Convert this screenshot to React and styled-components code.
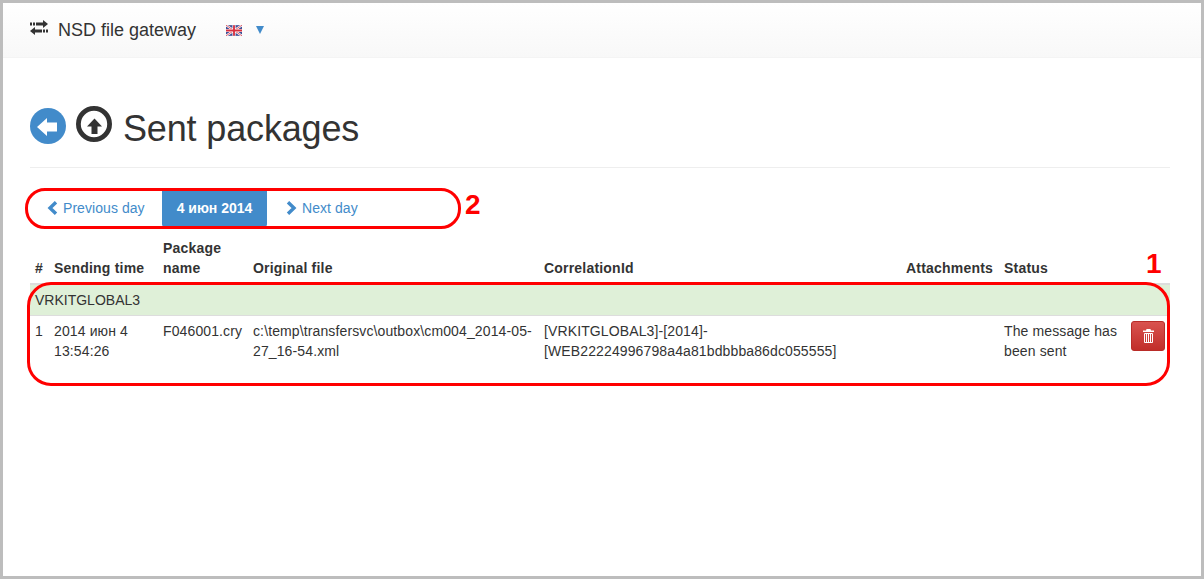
import React from "react";
import styled, { createGlobalStyle } from "styled-components";

const Global = createGlobalStyle`
  html, body { margin: 0; padding: 0; background: #fff; }
  body { font-family: "Liberation Sans", Arial, sans-serif; font-size: 14px; line-height: 20px; color: #333; }
`;

const Frame = styled.div`
  position: relative;
  box-sizing: border-box;
  width: 1204px;
  height: 579px;
  border: 3px solid #bdbdbd;
  overflow: hidden;
`;

const Navbar = styled.header`
  box-sizing: border-box;
  height: 55px;
  display: flex;
  align-items: center;
  padding: 0 0 0 27px;
  background: linear-gradient(to bottom, #ffffff 0%, #f8f8f8 100%);
  border-bottom: 1px solid #f4f4f4;
`;

const Brand = styled.div`
  display: flex;
  align-items: center;
  gap: 10px;
  font-size: 18px;
  color: #333;
`;

const BrandIcon = styled.span`
  display: inline-flex;
  margin-top: -6px;
`;

const Lang = styled.div`
  display: flex;
  align-items: center;
  gap: 14px;
  margin-left: 30px;
  margin-top: 0;
`;

const Caret = styled.span`
  width: 0;
  height: 0;
  border-left: 4px solid transparent;
  border-right: 4px solid transparent;
  border-top: 8px solid #428bca;
`;

const Main = styled.main`
  padding: 46px 31px 0 27px;
`;

const PageHeader = styled.div`
  display: flex;
  align-items: center;
  height: 49px;
  padding-bottom: 14px;
  border-bottom: 1px solid #eee;
  gap: 10px;
`;

const Title = styled.h1`
  margin: 0 0 0 1px;
  font-size: 36px;
  line-height: 40px;
  font-weight: 400;
  letter-spacing: -0.15px;
  color: #333;
`;

const IconSlot = styled.span`
  display: inline-flex;
  margin-top: ${(p) => p.$top}px;
`;

const Pager = styled.nav`
  display: flex;
  align-items: stretch;
  height: 38px;
  margin-top: 21px;
`;

const PagerLink = styled.a`
  display: flex;
  align-items: center;
  gap: 5px;
  box-sizing: border-box;
  width: ${(p) => p.$w}px;
  padding-left: ${(p) => p.$pad}px;
  color: #428bca;
  font-size: 14px;
  letter-spacing: 0.06px;
`;

const PagerActive = styled.span`
  display: flex;
  align-items: center;
  justify-content: center;
  width: 105px;
  background: #428bca;
  color: #fff;
  font-weight: 700;
  border-radius: 0 0 3px 3px;
`;

const Table = styled.table`
  width: 1140px;
  margin-top: 6px;
  border-collapse: collapse;
  table-layout: fixed;
`;

const Th = styled.th`
  width: ${(p) => p.$w}px;
  padding: 5px;
  text-align: left;
  vertical-align: bottom;
  font-size: 14px;
  line-height: 20px;
  font-weight: 700;
  letter-spacing: 0.2px;
  border-bottom: 2px solid #ddd;
`;

const GroupCell = styled.td`
  padding: 5px;
  height: 20px;
  background: #dff0d8;
  border-bottom: 1px solid #ddd;
  line-height: 20px;
`;

const Td = styled.td`
  padding: 5px;
  vertical-align: top;
  line-height: 20px;
  letter-spacing: 0.12px;
`;

const DeleteButton = styled.button`
  display: flex;
  align-items: center;
  justify-content: center;
  width: 34px;
  height: 30px;
  padding: 0;
  border: 1px solid #b92c28;
  border-radius: 3px;
  background: linear-gradient(to bottom, #d9534f 0%, #c12e2a 100%);
  color: #fff;
`;

const Oval = styled.div`
  position: absolute;
  left: ${(p) => p.$x}px;
  top: ${(p) => p.$y}px;
  width: ${(p) => p.$w}px;
  height: ${(p) => p.$h}px;
  box-sizing: border-box;
  border: 3px solid #f00;
  border-radius: ${(p) => p.$r}px;
  pointer-events: none;
`;

const Mark = styled.span`
  position: absolute;
  left: ${(p) => p.$x}px;
  top: ${(p) => p.$y}px;
  font-size: 28px;
  line-height: 30px;
  font-weight: 700;
  color: #f00;
`;

const TransferIcon = () => (
  <svg width="18" height="15" viewBox="0 0 18 15" style={{ display: "block" }}>
    <path fill="#333" d="M0 2.5h2v3H0zM3 2.5h2v3H3zM6 2.5h7V0l5 4-5 4V5.5H6z" />
    <path fill="#333" d="M18 9.5h-2v3h2zM15 9.5h-2v3h2zM12 9.5H5V7l-5 4 5 4v-2.5h7z" />
  </svg>
);

const Flag = () => (
  <svg width="16" height="11" viewBox="0 0 60 40" style={{ display: "block" }}>
    <rect width="60" height="40" fill="#3f4f96" />
    <path d="M0 0L60 40M60 0L0 40" stroke="#fff" strokeWidth="8" />
    <path d="M0 0L60 40M60 0L0 40" stroke="#d8404f" strokeWidth="3" />
    <path d="M30 0V40M0 20H60" stroke="#fff" strokeWidth="12" />
    <path d="M30 0V40M0 20H60" stroke="#d82f3f" strokeWidth="7" />
  </svg>
);

const BackIcon = () => (
  <svg width="36" height="36" viewBox="0 0 36 36" style={{ display: "block" }}>
    <circle cx="18" cy="18" r="18" fill="#428bca" />
    <path fill="#fff" d="M7 19L17 10V14.5H27V23.5H17V28Z" />
  </svg>
);

const UpIcon = () => (
  <svg width="36" height="36" viewBox="0 0 36 36" style={{ display: "block" }}>
    <circle cx="18" cy="18" r="15.6" fill="#fff" stroke="#333" strokeWidth="4.8" />
    <path fill="#333" d="M18.5 12.5L26 20.5H21.5V28H15.5V20.5H11Z" />
  </svg>
);

const ChevronLeft = () => (
  <svg width="11" height="14" viewBox="0 0 11 14">
    <path fill="none" stroke="#428bca" strokeWidth="3.4" d="M9 1.2L3 7l6 5.8" />
  </svg>
);

const ChevronRight = () => (
  <svg width="11" height="14" viewBox="0 0 11 14">
    <path fill="none" stroke="#428bca" strokeWidth="3.4" d="M2 1.2L8 7l-6 5.8" />
  </svg>
);

const TrashIcon = () => (
  <svg width="11" height="14" viewBox="0 0 11 14">
    <path fill="none" stroke="#fff" d="M1.5 4.5h8v9h-8zM3.5 5v8M5.5 5v8M7.5 5v8" />
    <path fill="#fff" d="M3.5 0h4l.5 1.5h3V3H0V1.5h3z" />
  </svg>
);

export default function App() {
  return (
    <>
      <Global />
      <Frame>
        <Navbar>
          <Brand>
            <BrandIcon><TransferIcon /></BrandIcon>
            NSD file gateway
          </Brand>
          <Lang>
            <Flag />
            <Caret />
          </Lang>
        </Navbar>
        <Main>
          <PageHeader>
            <IconSlot $top={-5}><BackIcon /></IconSlot>
            <IconSlot $top={-9}><UpIcon /></IconSlot>
            <Title>Sent packages</Title>
          </PageHeader>
          <Pager>
            <PagerLink $w={132} $pad={17}><ChevronLeft />Previous day</PagerLink>
            <PagerActive>4 июн 2014</PagerActive>
            <PagerLink $w={120} $pad={19}><ChevronRight />Next day</PagerLink>
          </Pager>
          <Table>
            <thead>
              <tr>
                <Th $w={9}>#</Th>
                <Th $w={99}>Sending time</Th>
                <Th $w={80}>Package name</Th>
                <Th $w={281}>Original file</Th>
                <Th $w={352}>CorrelationId</Th>
                <Th $w={88}>Attachments</Th>
                <Th $w={117}>Status</Th>
                <Th $w={34} />
              </tr>
            </thead>
            <tbody>
              <tr>
                <GroupCell colSpan={8}>VRKITGLOBAL3</GroupCell>
              </tr>
              <tr>
                <Td>1</Td>
                <Td>2014 июн 4 13:54:26</Td>
                <Td>F046001.cry</Td>
                <Td>c:\temp\transfersvc\outbox\cm004_2014-05-27_16-54.xml</Td>
                <Td>[VRKITGLOBAL3]-[2014]-[WEB22224996798a4a81bdbbba86dc055555]</Td>
                <Td />
                <Td>The message has been sent</Td>
                <Td><DeleteButton aria-label="Delete"><TrashIcon /></DeleteButton></Td>
              </tr>
            </tbody>
          </Table>
        </Main>
        <Oval $x={22} $y={185} $w={436} $h={41} $r={20} />
        <Mark $x={462} $y={187}>2</Mark>
        <Oval $x={24} $y={279} $w={1143} $h={104} $r={24} />
        <Mark $x={1143} $y={246}>1</Mark>
      </Frame>
    </>
  );
}
